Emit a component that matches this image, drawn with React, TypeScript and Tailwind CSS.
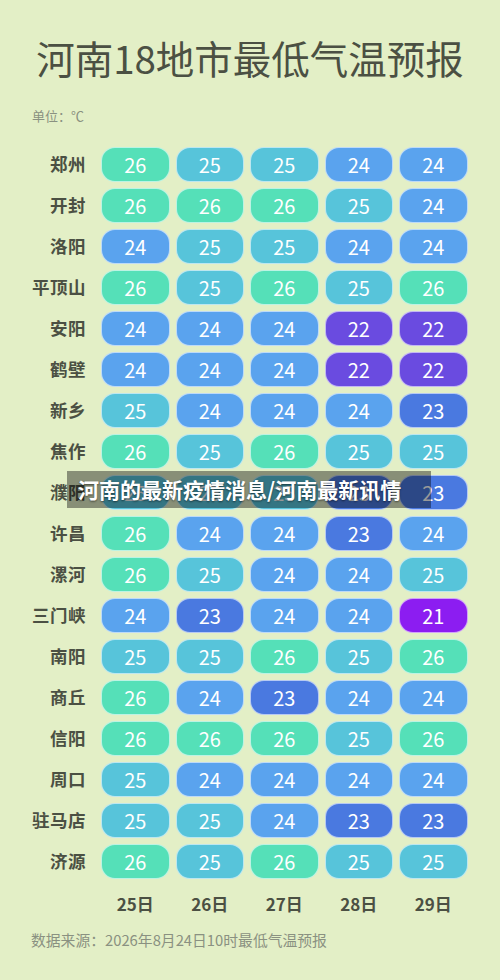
import React from "react";

const rows: [string, number[]][] = [
  ["郑州", [26, 25, 25, 24, 24]],
  ["开封", [26, 26, 26, 25, 24]],
  ["洛阳", [24, 25, 25, 24, 24]],
  ["平顶山", [26, 25, 26, 25, 26]],
  ["安阳", [24, 24, 24, 22, 22]],
  ["鹤壁", [24, 24, 24, 22, 22]],
  ["新乡", [25, 24, 24, 24, 23]],
  ["焦作", [26, 25, 26, 25, 25]],
  ["濮阳", [25, 25, 25, 23, 23]],
  ["许昌", [26, 24, 24, 23, 24]],
  ["漯河", [26, 25, 24, 24, 25]],
  ["三门峡", [24, 23, 24, 24, 21]],
  ["南阳", [25, 25, 26, 25, 26]],
  ["商丘", [26, 24, 23, 24, 24]],
  ["信阳", [26, 26, 26, 25, 26]],
  ["周口", [25, 24, 24, 24, 24]],
  ["驻马店", [25, 25, 24, 23, 23]],
  ["济源", [26, 25, 26, 25, 25]],
];

const days = ["25日", "26日", "27日", "28日", "29日"];

const pillColor: Record<number, string> = {
  26: "bg-[#55e0b8]",
  25: "bg-[#57c4da]",
  24: "bg-[#5aa3ee]",
  23: "bg-[#4a79e0]",
  22: "bg-[#6a4be0]",
  21: "bg-[#8c1df1]",
};

const App: React.FC = () => {
  return (
    <div
      className="relative w-[500px] h-[980px] bg-[#e3efc6] overflow-hidden"
      style={{ fontFamily: '"Noto Sans CJK SC", "Noto Sans", sans-serif' }}
    >
      {/* Title */}
      <h1 className="pt-[33px] text-center text-[38.5px] leading-[48px] text-[#4b5043]">
        河南18地市最低气温预报
      </h1>
      <div className="mt-[25px] pl-[32px] text-[13px] leading-[20px] text-[#8a9181]">
        单位：℃
      </div>

      {/* Table */}
      <div className="mt-[21px] flex flex-col gap-[6px]">
        {rows.map(([city, temps]) => (
          <div key={city} className="flex items-center h-[35px]">
            <div className="w-[86px] text-right text-[17.5px] font-bold text-[#4b5043] tracking-[0.5px]">
              {city}
            </div>
            <div className="ml-[15px] flex gap-[6px]">
              {temps.map((t, i) => (
                <div
                  key={i}
                  className={`w-[68.5px] h-[35px] rounded-[14px] border border-white/60 flex items-center justify-center text-white text-[20px] ${pillColor[t]}`}
                >
                  {t}
                </div>
              ))}
            </div>
          </div>
        ))}
      </div>

      {/* Days */}
      <div className="mt-[13px] ml-[101px] flex gap-[6px]">
        {days.map((d) => (
          <div key={d} className="w-[68.5px] text-center text-[17px] leading-[24px] font-bold text-[#4b5043]">
            {d}
          </div>
        ))}
      </div>

      <div className="mt-[13px] pl-[31px] text-[14.8px] leading-[22px] text-[#8a9181]">
        数据来源：2026年8月24日10时最低气温预报
      </div>

      {/* Overlay banner */}
      <div className="absolute left-[67px] top-[471px] w-[364px] h-[37px] bg-black/40 flex items-center pl-[11px]">
        <span className="text-white font-bold text-[21px] leading-none [text-shadow:0_1px_2px_rgba(0,0,0,0.5)]">
          河南的最新疫情消息/河南最新讯情
        </span>
      </div>
    </div>
  );
};

export default App;
